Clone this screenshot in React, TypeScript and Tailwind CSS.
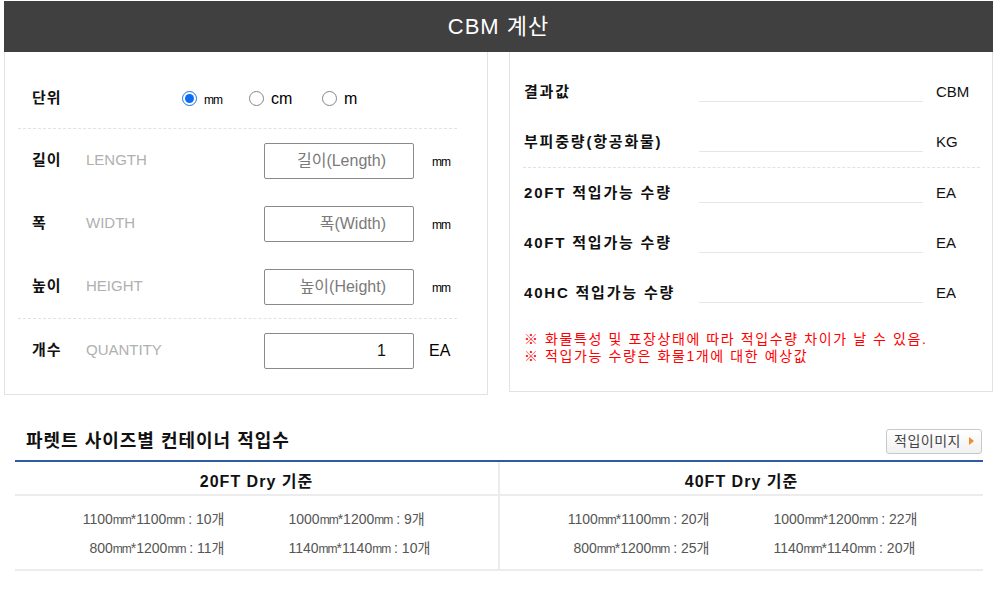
import React, { useState } from "react";

const FONT = { fontFamily: '"Liberation Sans", "Noto Sans CJK KR", sans-serif' };

function Mm() {
  return <span className="text-[12px] tracking-[-1px]">mm</span>;
}

function Radio({ checked, label, onClick, width }: { checked: boolean; label: React.ReactNode; onClick: () => void; width: string }) {
  return (
    <button onClick={onClick} className={`flex items-center gap-[7px] ${width}`}>
      {checked ? (
        <span className="w-[15px] h-[15px] rounded-full border-[1.5px] border-[#1a73e8] flex items-center justify-center">
          <span className="w-[9px] h-[9px] rounded-full bg-[#0b6cf4]" />
        </span>
      ) : (
        <span className="w-[15px] h-[15px] rounded-full border-[1.5px] border-[#858585]" />
      )}
      <span className="text-[16px] text-black">{label}</span>
    </button>
  );
}

function DimRow({ ko, en, placeholder, unit, value }: { ko: string; en: string; placeholder: string; unit: string; value?: string }) {
  return (
    <div className="h-[63px] flex items-center pl-[14px]">
      <span className="w-[54px] text-[15px] font-bold tracking-[1px] text-[#111]">{ko}</span>
      <span className="w-[178px] text-[15px] text-[#b0b0b0]">{en}</span>
      <input
        defaultValue={value}
        placeholder={placeholder}
        className="w-[150px] h-[36px] border border-[#8a8a8a] rounded-[2px] text-right pr-[27px] text-[16px] text-[#111] placeholder:text-[#7a7a7a] outline-none"
      />
      {unit === "mm" ? (
        <span className="ml-[18px] text-black">
          <Mm />
        </span>
      ) : (
        <span className="ml-[15px] text-[16px]">{unit}</span>
      )}
    </div>
  );
}

function ResultRow({ label, unit }: { label: string; unit: string }) {
  return (
    <div className="h-[50px] flex items-center pl-[1px]">
      <span className="w-[175px] text-[15px] font-bold tracking-[1.8px] text-[#111]">{label}</span>
      <input readOnly className="w-[224px] h-[20px] border-b border-[#e3e6ea] outline-none" />
      <span className="ml-[13px] text-[15px] text-[#111]">{unit}</span>
    </div>
  );
}

function Size({ a, b, n }: { a: string; b: string; n: number }) {
  return (
    <>
      {a}
      <Mm />*{b}
      <Mm /> : {n}개
    </>
  );
}

const pallets = [
  {
    title: "20FT Dry 기준",
    rows: [
      [["1100", "1100", 10], ["1000", "1200", 9]],
      [["800", "1200", 11], ["1140", "1140", 10]],
    ],
  },
  {
    title: "40FT Dry 기준",
    rows: [
      [["1100", "1100", 20], ["1000", "1200", 22]],
      [["800", "1200", 25], ["1140", "1140", 20]],
    ],
  },
] as { title: string; rows: [string, string, number][][] }[];

export default function App() {
  const [unit, setUnit] = useState("mm");

  return (
    <div style={FONT} className="w-[997px] h-[606px] bg-white pt-px px-[4px]">
      {/* Header */}
      <div className="h-[51px] bg-[#404040] flex items-center justify-center">
        <h1 className="text-[22px] tracking-[1px] text-white">CBM 계산</h1>
      </div>

      <div className="flex gap-[21px]">
        {/* Input panel */}
        <div className="w-[484px] h-[343px] border border-t-0 border-[#dde3e8] pt-[17px]">
          <div className="ml-[13px] w-[439px]">
            <div className="h-[60px] flex items-center pl-[14px] border-b border-dashed border-[#dde3e8]">
              <span className="w-[150px] text-[15px] font-bold tracking-[1px] text-[#111]">단위</span>
              <Radio checked={unit === "mm"} label={<Mm />} onClick={() => setUnit("mm")} width="w-[67px]" />
              <Radio checked={unit === "cm"} label="cm" onClick={() => setUnit("cm")} width="w-[73px]" />
              <Radio checked={unit === "m"} label="m" onClick={() => setUnit("m")} width="w-[40px]" />
            </div>
            <div className="border-b border-dashed border-[#dde3e8]">
              <DimRow ko="길이" en="LENGTH" placeholder="길이(Length)" unit="mm" />
              <DimRow ko="폭" en="WIDTH" placeholder="폭(Width)" unit="mm" />
              <DimRow ko="높이" en="HEIGHT" placeholder="높이(Height)" unit="mm" />
            </div>
            <DimRow ko="개수" en="QUANTITY" placeholder="" unit="EA" value="1" />
          </div>
        </div>

        {/* Result panel */}
        <div className="w-[484px] h-[340px] border border-t-0 border-[#dde3e8] pt-[15px]">
          <div className="ml-[13px] w-[457px]">
            <div className="border-b border-dashed border-[#dde3e8]">
              <ResultRow label="결과값" unit="CBM" />
              <ResultRow label="부피중량(항공화물)" unit="KG" />
            </div>
            <ResultRow label="20FT 적입가능 수량" unit="EA" />
            <ResultRow label="40FT 적입가능 수량" unit="EA" />
            <ResultRow label="40HC 적입가능 수량" unit="EA" />
            <div className="mt-[13px] pl-[1px] text-[14px] leading-[17px] tracking-[1.6px] text-[#ff0000]">
              <p>※ 화물특성 및 포장상태에 따라 적입수량 차이가 날 수 있음.</p>
              <p>※ 적입가능 수량은 화물1개에 대한 예상값</p>
            </div>
          </div>
        </div>
      </div>

      {/* Pallet table */}
      <div className="ml-[11px] w-[968px] mt-[33px]">
        <div className="flex items-center justify-between h-[26px] pl-[11px] pr-[1px]">
          <h2 className="text-[18px] font-bold tracking-[1px] text-[#111]">파렛트 사이즈별 컨테이너 적입수</h2>
          <button className="h-[25px] w-[96px] border border-[#c9c9c9] rounded-[3px] bg-gradient-to-b from-white to-[#f1f1f1] flex items-center justify-center gap-[8px] text-[14px] tracking-[0.5px] text-[#444]">
            적입이미지
            <svg width="5" height="8" viewBox="0 0 5 8">
              <path d="M0 0 L5 4 L0 8 Z" fill="#f28c28" />
            </svg>
          </button>
        </div>
        <div className="mt-[6px] border-t-2 border-[#2f5c9e] border-b-2 border-b-[#ececec] flex">
          {pallets.map((p, i) => (
            <div key={p.title} className={`flex-1 ${i === 0 ? "border-r-2 border-[#ececec]" : ""}`}>
              <div className="h-[34px] pt-[7px] flex items-center justify-center border-b-2 border-[#ececec] text-[16px] font-bold tracking-[1px] text-[#111]">
                {p.title}
              </div>
              <div className="pt-[9px] pb-[6px] text-[14px] text-[#555]">
                {p.rows.map((r, j) => (
                  <div key={j} className="grid grid-cols-2 h-[29px] items-center">
                    <span className="text-right pr-[32px]">
                      <Size a={r[0][0]} b={r[0][1]} n={r[0][2]} />
                    </span>
                    <span className="text-left pl-[32px]">
                      <Size a={r[1][0]} b={r[1][1]} n={r[1][2]} />
                    </span>
                  </div>
                ))}
              </div>
            </div>
          ))}
        </div>
      </div>
    </div>
  );
}
